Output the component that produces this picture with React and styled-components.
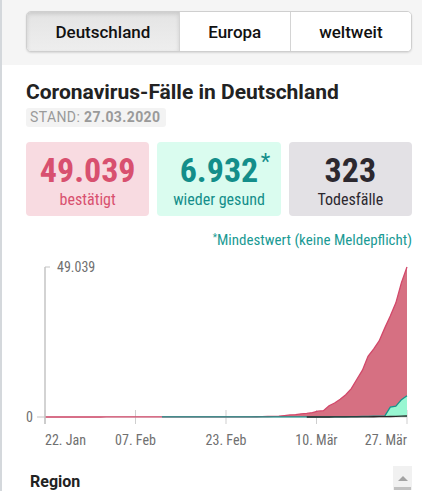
import React from "react";
import styled, { createGlobalStyle } from "styled-components";

const GlobalStyle = createGlobalStyle`
  html, body {
    margin: 0;
    padding: 0;
    background: #fff;
  }
  body {
    font-family: Roboto, "Liberation Sans", sans-serif;
    color: #222;
  }
`;

const COND = `"Roboto Condensed", Roboto, "Liberation Sans Narrow", sans-serif`;

// daily values from 22. Jan to 27. Mär
const cases = [
  0, 0, 0, 0, 0, 1, 4, 4, 4, 5, 8, 10, 12, 12, 12, 12, 13, 13, 14, 14, 16, 16,
  16, 16, 16, 16, 16, 16, 16, 16, 16, 16, 16, 16, 17, 27, 46, 48, 79, 130, 159,
  196, 262, 482, 670, 799, 1040, 1176, 1457, 1908, 2078, 3675, 4585, 5795,
  7272, 9257, 12327, 15320, 19848, 22213, 24873, 29056, 32986, 37323, 43938,
  49039,
];
const recoveredStart = 21;
const recovered = [
  14, 14, 14, 14, 14, 14, 14, 14, 14, 14, 14, 14, 14, 14, 14, 14, 14, 16, 16,
  16, 16, 16, 16, 16, 16, 18, 18, 25, 25, 46, 46, 46, 46, 46, 105, 113, 180,
  233, 266, 266, 266, 3243, 3547, 5673, 6932,
];
const deathsStart = 47;
const deaths = [
  2, 2, 3, 3, 7, 9, 11, 17, 24, 28, 44, 67, 84, 94, 123, 157, 206, 267, 323,
];

const Page = styled.div`
  border-left: 2px solid #d4d8dc;
  min-height: 491px;
  box-sizing: border-box;
`;

const TopBar = styled.div`
  background: #f5f5f5;
  padding: 11px 10px 13px 24px;
`;

const Segmented = styled.div`
  display: flex;
  height: 41px;
  border: 1px solid #cfcfcf;
  border-radius: 5px;
  box-shadow: 0 1px 2px rgba(0, 0, 0, 0.12);
  overflow: hidden;
  box-sizing: border-box;
  background: #fff;
`;

const SegButton = styled.div`
  flex: 1 1 auto;
  display: flex;
  align-items: center;
  justify-content: center;
  padding: 0 24px;
  font-size: 17px;
  font-weight: 500;
  color: #111;
  border-left: ${(p) => (p.$first ? "none" : "1px solid #d4d4d4")};
  background: ${(p) =>
    p.$active ? "linear-gradient(#e4e4e4, #eeeeee)" : "#fff"};
  box-shadow: ${(p) =>
    p.$active ? "inset 0 2px 4px rgba(0, 0, 0, 0.12)" : "none"};
`;

const Content = styled.div`
  padding: 0 10px 0 24px;
`;

const Title = styled.h1`
  margin: 15px 0 0;
  font-size: 21px;
  line-height: 24px;
  font-weight: 700;
  color: #222;
`;

const Stand = styled.div`
  display: inline-block;
  margin-top: 4px;
  padding: 0 5px 0 4px;
  height: 19px;
  line-height: 19px;
  background: #f3f3f3;
  border-radius: 3px;
  font-size: 14px;
  letter-spacing: 0.4px;
  color: #9a9a9a;
  b {
    font-weight: 700;
  }
`;

const StatRow = styled.div`
  display: grid;
  grid-template-columns: repeat(3, 1fr);
  gap: 8px;
  margin-top: 15px;
`;

const palette = {
  red: { bg: "#f8dbe1", fg: "#d8506f" },
  green: { bg: "#dafcef", fg: "#138e8a" },
  grey: { bg: "#e3e1e5", fg: "#2c282f" },
};

const StatCard = styled.div`
  height: 74px;
  border-radius: 4px;
  background: ${(p) => palette[p.$tone].bg};
  color: ${(p) => palette[p.$tone].fg};
  display: flex;
  flex-direction: column;
  align-items: center;
  justify-content: center;
  font-family: ${COND};
`;

const StatValue = styled.div`
  font-size: 34px;
  line-height: 36px;
  font-weight: 700;
  position: relative;
  margin-top: 3px;
  sup {
    position: absolute;
    top: -8px;
    right: -12px;
    font-size: 22px;
    font-weight: 400;
  }
`;

const StatLabel = styled.div`
  font-size: 16px;
  line-height: 20px;
  margin-top: 2px;
`;

const Note = styled.div`
  margin-top: 13px;
  text-align: right;
  font-family: ${COND};
  font-size: 15px;
  line-height: 17px;
  color: #1a9a94;
  sup {
    font-size: 10px;
    vertical-align: 4px;
  }
`;

const ChartSvg = styled.svg`
  display: block;
  width: 388px;
  height: 212px;
  margin-left: -2px;
  text {
    font-family: ${COND};
    font-size: 14px;
    fill: #707070;
  }
`;

const RegionRow = styled.div`
  display: flex;
  justify-content: space-between;
  align-items: flex-start;
  margin-top: 5px;
  padding-left: 4px;
`;

const RegionLabel = styled.div`
  font-size: 16px;
  font-weight: 700;
  color: #222;
  padding-top: 6px;
`;

const ScrollUp = styled.div`
  width: 19px;
  height: 24px;
  background: #f1f1f1;
  display: flex;
  flex-direction: column;
  align-items: center;
  justify-content: space-between;
  &::before {
    content: "";
    margin-top: 10px;
    border-left: 5px solid transparent;
    border-right: 5px solid transparent;
    border-bottom: 5px solid #a3a3a3;
  }
  &::after {
    content: "";
    width: 17px;
    height: 3px;
    background: #c1c1c1;
  }
`;

const X0 = 21;
const X1 = 383;
const Y0 = 168;
const Y1 = 18;
const DAYS = 65;
const MAX = 49039;
const px = (d) => X0 + ((X1 - X0) * d) / DAYS;
const py = (v) => Y0 - ((Y0 - Y1) * v) / MAX;

function linePts(values, start) {
  return values.map((v, i) => `${px(start + i).toFixed(2)},${py(v).toFixed(2)}`);
}

function areaPath(values, start) {
  const pts = linePts(values, start);
  const last = start + values.length - 1;
  return `M${px(start)},${Y0} L${pts.join(" L")} L${px(last)},${Y0} Z`;
}

const ticks = [
  { x: X0, label: "22. Jan", anchor: "start" },
  { x: X0 + 90.5, label: "07. Feb", anchor: "middle" },
  { x: X0 + 181, label: "23. Feb", anchor: "middle" },
  { x: X0 + 271.5, label: "10. Mär", anchor: "middle" },
  { x: X1, label: "27. Mär", anchor: "end" },
];

function Chart() {
  return (
    <ChartSvg viewBox="0 0 388 212">
      {ticks.map((t) => (
        <line key={t.label} x1={t.x} x2={t.x} y1={161} y2={175} stroke="#cfcfcf" strokeWidth="1" />
      ))}
      <line x1={X0} x2={X1} y1={Y0} y2={Y0} stroke="#cfcfcf" strokeWidth="1" />
      <path d={areaPath(cases, 0)} fill="#d67082" />
      <polyline points={linePts(cases, 0).join(" ")} fill="none" stroke="#d2486a" strokeWidth="1.3" />
      <path d={areaPath(recovered, recoveredStart)} fill="#98f7d2" />
      <polyline points={linePts(recovered, recoveredStart).join(" ")} fill="none" stroke="#16948c" strokeWidth="1.3" />
      <polyline points={linePts(deaths, deathsStart).join(" ")} fill="none" stroke="#2a2a2a" strokeWidth="1.3" />
      <line x1={X0} x2={X0} y1={Y1} y2={Y0 + 7} stroke="#c4c4c4" strokeWidth="1.5" />
      <line x1={X0} x2={X0 + 5} y1={Y1} y2={Y1} stroke="#c4c4c4" strokeWidth="1" />
      <line x1={X0 - 8} x2={X0} y1={Y0} y2={Y0} stroke="#c4c4c4" strokeWidth="1" />
      <text x={X0 + 12} y={Y1 + 5}>49.039</text>
      <text x={X0 - 12} y={Y0 + 5} textAnchor="end">0</text>
      {ticks.map((t) => (
        <text key={t.label} x={t.x} y={196} textAnchor={t.anchor}>
          {t.label}
        </text>
      ))}
    </ChartSvg>
  );
}

const tabs = ["Deutschland", "Europa", "weltweit"];

export default function App() {
  return (
    <Page>
      <GlobalStyle />
      <TopBar>
        <Segmented>
          {tabs.map((t, i) => (
            <SegButton key={t} $first={i === 0} $active={i === 0}>
              {t}
            </SegButton>
          ))}
        </Segmented>
      </TopBar>
      <Content>
        <Title>Coronavirus-Fälle in Deutschland</Title>
        <Stand>
          STAND: <b>27.03.2020</b>
        </Stand>
        <StatRow>
          <StatCard $tone="red">
            <StatValue>49.039</StatValue>
            <StatLabel>bestätigt</StatLabel>
          </StatCard>
          <StatCard $tone="green">
            <StatValue>
              6.932<sup>*</sup>
            </StatValue>
            <StatLabel>wieder gesund</StatLabel>
          </StatCard>
          <StatCard $tone="grey">
            <StatValue>323</StatValue>
            <StatLabel>Todesfälle</StatLabel>
          </StatCard>
        </StatRow>
        <Note>
          <sup>*</sup>Mindestwert (keine Meldepflicht)
        </Note>
        <Chart />
        <RegionRow>
          <RegionLabel>Region</RegionLabel>
          <ScrollUp />
        </RegionRow>
      </Content>
    </Page>
  );
}
